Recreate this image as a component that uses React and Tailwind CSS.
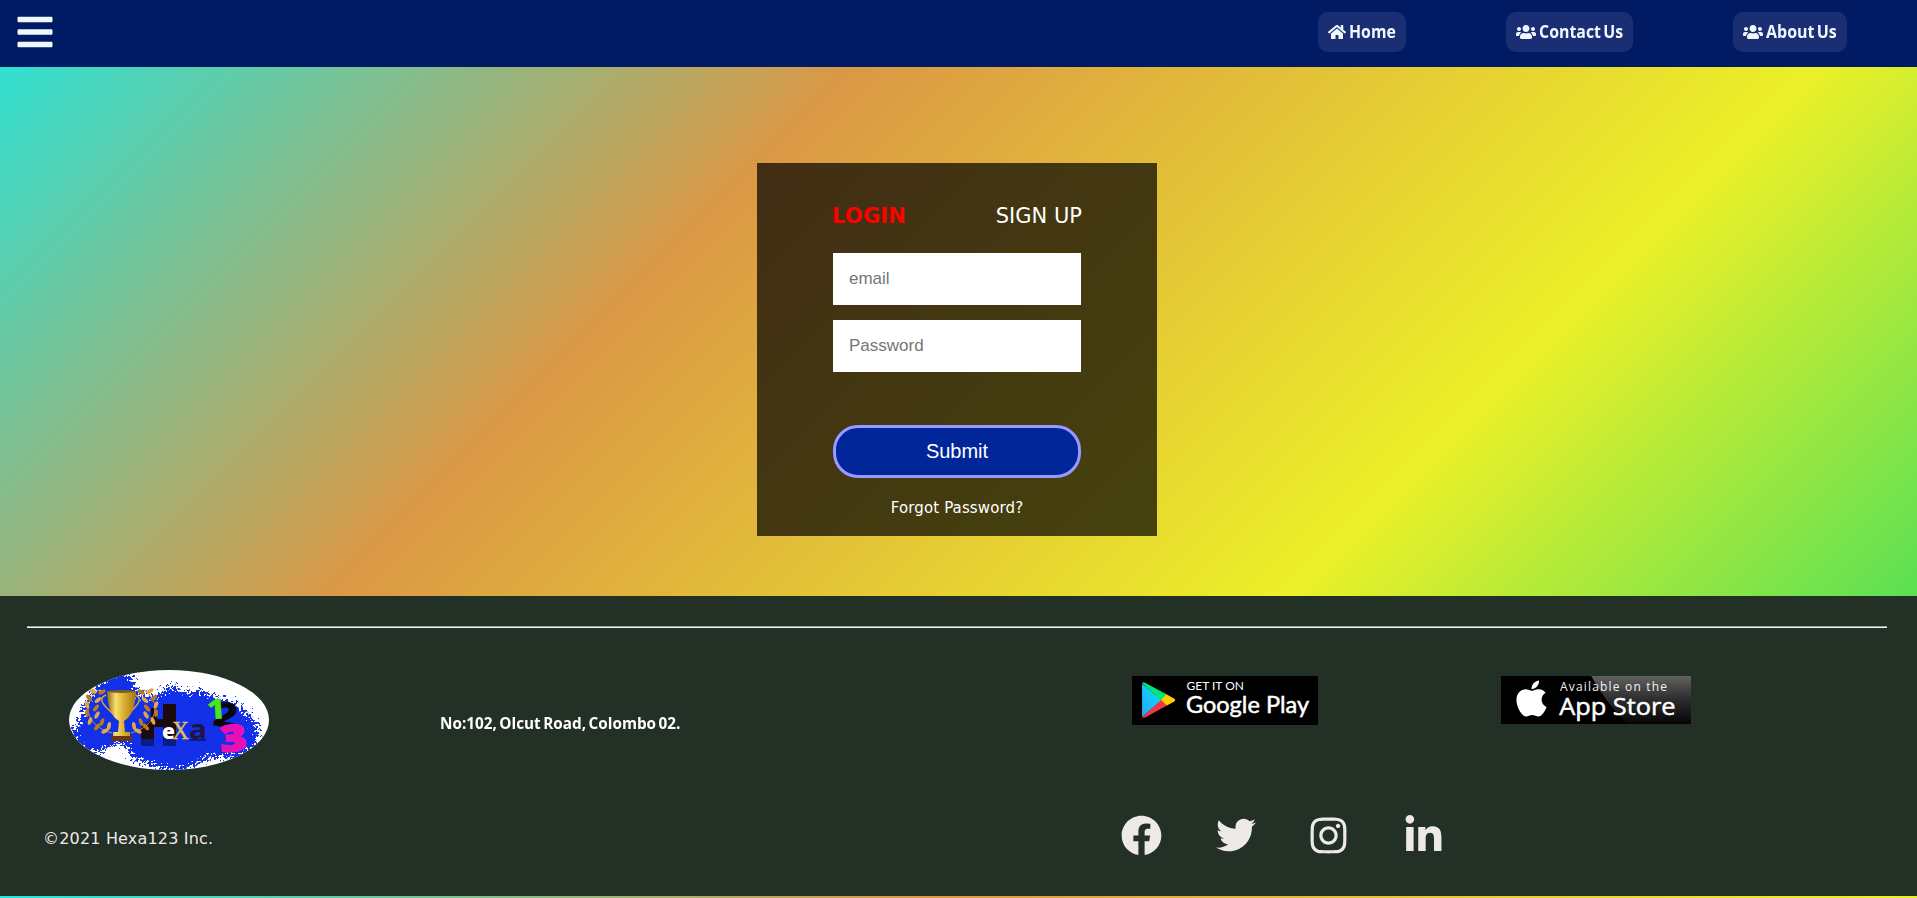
import React from "react";
import {
  FaApple,
  FaBars,
  FaFacebook,
  FaHome,
  FaInstagram,
  FaLinkedinIn,
  FaTwitter,
  FaUsers,
} from "react-icons/fa";

const navLink =
  "flex h-10 items-center gap-[3px] rounded-[10px] bg-[#1a2f73] pl-[10px] text-[17px] font-bold text-[#f0f8ff] font-['Open_Sans',sans-serif] whitespace-nowrap";

function NavBar() {
  return (
    <nav className="flex h-[67px] items-start bg-[#001a64] pr-[70px]">
      <button className="ml-[15px] mt-3 text-[40px] text-[#f0f8ff]" aria-label="Menu">
        <FaBars />
      </button>
      <div className="ml-auto mt-3 flex gap-[100px]">
        <a href="#home" className={navLink + " w-[88px]"}>
          <FaHome className="h-4 w-[18px] shrink-0" />
          <span className="w-0 origin-left scale-x-[0.93]">Home</span>
        </a>
        <a href="#contact" className={navLink + " w-[127px]"}>
          <FaUsers className="h-4 w-5 shrink-0" />
          <span className="w-0 origin-left scale-x-[0.935] [word-spacing:-2px]">Contact Us</span>
        </a>
        <a href="#about" className={navLink + " w-[114px]"}>
          <FaUsers className="h-4 w-5 shrink-0" />
          <span className="w-0 origin-left scale-x-[0.94] [word-spacing:-2px]">About Us</span>
        </a>
      </div>
    </nav>
  );
}

function LoginCard() {
  const field =
    "block h-[52px] w-full bg-white px-4 text-[17px] text-black outline-none placeholder:text-[#757575] font-['Liberation_Sans',sans-serif]";
  return (
    <form className="h-[373px] w-[400px] bg-black/70 px-[76px] pt-[38px] font-['DejaVu_Sans',sans-serif] text-white">
      <div className="flex h-[30px] items-center justify-between text-[21px] leading-[30px]">
        <span className="-ml-px font-bold tracking-[0.2px] text-[#ff0000]">LOGIN</span>
        <span className="-mr-px whitespace-nowrap">SIGN UP</span>
      </div>
      <input className={field + " mt-[22px]"} type="email" placeholder="email" />
      <input className={field + " mt-[15px]"} type="password" placeholder="Password" />
      <button
        type="button"
        className="mt-[53px] block h-[53px] w-full rounded-[25px] border-[3px] border-[#9999ff] bg-[#002699] pb-[2px] text-[20px] font-['Liberation_Sans',sans-serif]"
      >
        Submit
      </button>
      <p className="mt-[18px] text-center text-[15px] leading-6 tracking-[0.12px]">Forgot Password?</p>
    </form>
  );
}

const leaves = [
  [20, 21, -60], [16, 28, -40], [14, 35, -20], [14, 43, 0], [17, 51, 20], [24, 57, 40], [32, 61, 60],
  [29, 22, 60], [25, 30, 50], [23, 38, 40], [24, 45, 30], [29, 52, 20], [36, 56, 10],
];

function Wreath() {
  return (
    <g>
      <path d="M30 20C12 32 16 56 43 63" fill="none" stroke="#c98a2c" strokeWidth="1" />
      {leaves.map(([x, y, r], i) => (
        <ellipse
          key={i}
          cx={x + 4}
          cy={y}
          rx="1.9"
          ry="4"
          fill={i % 2 ? "#b9791f" : "#e0a848"}
          transform={`rotate(${r} ${x + 4} ${y})`}
        />
      ))}
    </g>
  );
}

function HexaLogo() {
  return (
    <svg className="h-[100px] w-[200px]" viewBox="0 0 200 100">
      <defs>
        <clipPath id="oval">
          <ellipse cx="100" cy="50" rx="100" ry="50" />
        </clipPath>
        <filter id="splatter" x="-20%" y="-20%" width="140%" height="140%" colorInterpolationFilters="sRGB">
          <feTurbulence type="fractalNoise" baseFrequency="0.4" numOctaves="3" seed="4" />
          <feDisplacementMap in="SourceGraphic" scale="24" xChannelSelector="R" yChannelSelector="G" />
          <feGaussianBlur stdDeviation="0.5" />
        </filter>
        <linearGradient id="gold">
          <stop offset="0" stopColor="#8f6a10" />
          <stop offset=".3" stopColor="#f7df70" />
          <stop offset=".6" stopColor="#d8ad2c" />
          <stop offset="1" stopColor="#a87712" />
        </linearGradient>
      </defs>
      <g clipPath="url(#oval)">
        <rect width="200" height="100" fill="#fff" />
        <path
          d="M3 62L13 48L15 35L33 11L50 2L62 6L68 24L84 28L94 21L105 15L116 23L135 20L145 28L165 33L180 45L190 58L187 75L171 88L150 87L138 88L125 96L110 101L95 99L80 94L63 88L57 75L48 72L35 81L20 81L8 74Z"
          fill="#1230e8"
          filter="url(#splatter)"
        />
        <path d="M72 69H85V76H72ZM94 69H107V76H94ZM120 69H137V71H120Z" fill="#0a1d86" />
        <path d="M82 38H88V49H94V34H107V69H94V57H85V69H72V58L82 49Z" fill="#1c0a0c" />
        <Wreath />
        <g transform="translate(105 0) scale(-1 1)">
          <Wreath />
        </g>
        <path d="M37 25Q29 28 36 36L45 45M66 25Q74 28 67 36L59 45" fill="none" stroke="#d5a740" strokeWidth="1.4" />
        <path d="M38 21H67Q66 45 55 51L56 62H61V66H44V62H49L50 51Q39 45 38 21Z" fill="url(#gold)" />
        <ellipse cx="52.500" cy="21.500" rx="14.500" ry="1.500" fill="#80611a" />
        <path d="M43 66H62L64 71H41Z" fill="#6b3414" />
        <text x="93" y="68.500" fontFamily="Open Sans, sans-serif" fontWeight="800" fontSize="21" fill="#fff">e</text>
        <text x="103" y="69" fontFamily="Liberation Serif, serif" fontSize="25" fill="#e3bd55" stroke="#e3bd55" strokeWidth=".4" textLength="17" lengthAdjust="spacingAndGlyphs">X</text>
        <text x="120" y="69" fontFamily="Open Sans, sans-serif" fontWeight="700" fontSize="27" fill="#231344" textLength="18" lengthAdjust="spacingAndGlyphs">a</text>
        <text x="145" y="57" fontFamily="Open Sans, sans-serif" fontWeight="800" fontSize="35" fill="#08080d" transform="rotate(10 156 45)" textLength="24" lengthAdjust="spacingAndGlyphs">2</text>
        <text x="138" y="48.500" fontFamily="Open Sans, sans-serif" fontWeight="700" fontSize="27" fill="#4be51a" stroke="#4be51a" strokeWidth=".8" transform="rotate(-4 148 40)" textLength="19" lengthAdjust="spacingAndGlyphs">1</text>
        <text x="151" y="81" fontFamily="Open Sans, sans-serif" fontWeight="800" fontSize="36" fill="#e80fb4" stroke="#e80fb4" strokeWidth="2" transform="rotate(-5 164 68)" textLength="26" lengthAdjust="spacingAndGlyphs">3</text>
      </g>
    </svg>
  );
}

function GooglePlayBadge() {
  return (
    <svg className="h-[49px] w-[186px]" viewBox="0 0 157 49" preserveAspectRatio="none">
      <defs>
        <linearGradient id="playBlue" x1="1" y1="0" x2="0" y2="1">
          <stop offset="0" stopColor="#00e5ff" />
          <stop offset="1" stopColor="#2aa5f8" />
        </linearGradient>
      </defs>
      <rect width="157" height="49" fill="#000" />
      <path d="M8.500 7.500V41L25 24.200Z" fill="url(#playBlue)" />
      <path d="M8.500 7Q9.500 5.800 11 6.800L29.500 18.500L24.500 24.500Z" fill="#00e676" />
      <path d="M29 18.200L35.500 22.500Q37.500 24 35.500 25.700L29 29.800L24.200 24.200Z" fill="#ffcc00" />
      <path d="M8.500 41.200L24.500 24L29.500 29.600L11 41.500Q9.500 42.300 8.500 41.200Z" fill="#f5364a" />
      <text x="46" y="14.500" fontFamily="Lato, sans-serif" fontSize="12" fill="#fff" textLength="48.500" lengthAdjust="spacingAndGlyphs">GET IT ON</text>
      <text x="45.500" y="37.500" fontFamily="Lato, sans-serif" fontSize="24" fill="#fff" stroke="#fff" strokeWidth=".5" textLength="104" lengthAdjust="spacingAndGlyphs">Google Play</text>
    </svg>
  );
}

function AppStoreBadge() {
  return (
    <div className="relative h-12 w-[190px]">
      <svg className="h-12 w-[190px]" viewBox="0 0 160 48" preserveAspectRatio="none">
        <defs>
          <linearGradient id="gloss" x1="0" y1="0" x2="0" y2="1">
            <stop offset="0" stopColor="#606060" />
            <stop offset=".5" stopColor="#2c2c2c" />
            <stop offset="1" stopColor="#050505" />
          </linearGradient>
        </defs>
        <rect width="160" height="48" fill="#000" />
        <path d="M76 0H160V48H106Q88 26 76 0Z" fill="url(#gloss)" />
        <text transform="scale(.842 1)" x="59" y="15" fontFamily="Open Sans, sans-serif" fontSize="12" fontWeight="500" fill="#f2f2f2" textLength="107">Available on the</text>
        <text x="49" y="39.500" fontFamily="Open Sans, sans-serif" fontSize="24.500" fontWeight="400" fill="#fff" stroke="#fff" strokeWidth=".5" textLength="98" lengthAdjust="spacingAndGlyphs">App Store</text>
      </svg>
      <FaApple className="absolute left-[10px] top-[2px] h-[41px] w-[41px] text-white" />
    </div>
  );
}

function Footer() {
  return (
    <footer className="h-[300px] bg-[#233025] pt-[30px]">
      <div className="ml-[27px] h-[2px] w-[1860px] border-b border-[#f3f4f3] bg-[#9a9f9a]" />
      <div className="flex h-[142px] items-start pt-[42px]">
        <div className="ml-[69px] shrink-0">
          <HexaLogo />
        </div>
        <p className="ml-[171px] mt-[41px] w-[692px] shrink-0 whitespace-nowrap font-['Open_Sans',sans-serif] text-[16px] font-bold leading-6 text-white">
          <span className="inline-block origin-left scale-x-[0.955] [word-spacing:-1.5px]">No:102, Olcut Road, Colombo 02.</span>
        </p>
        <div className="mt-[6px] shrink-0">
          <GooglePlayBadge />
        </div>
        <div className="ml-[183px] mt-[6px] shrink-0">
          <AppStoreBadge />
        </div>
      </div>
      <div className="mt-[45px] flex h-10 items-center text-[41px] text-[#eee9e9]">
        <p className="ml-[43px] mt-[7px] w-[1078px] font-['DejaVu_Sans',sans-serif] text-[16px] leading-6 tracking-[0.18px]">
          ©2021 Hexa123 Inc.
        </p>
        <FaFacebook className="shrink-0" />
        <FaTwitter className="ml-[54px] h-10 w-10 shrink-0" />
        <FaInstagram className="ml-[52px] shrink-0" />
        <FaLinkedinIn className="ml-[54px] shrink-0" />
      </div>
    </footer>
  );
}

export default function App() {
  return (
    <div className="h-[898px] overflow-hidden bg-[linear-gradient(135deg,#24e6dc_0%,#db9845_33%,#ecf028_67%,#14d969_100%)] bg-[length:100%_896px]">
      <NavBar />
      <main className="flex h-[529px] justify-center pr-[3px] pt-24">
        <LoginCard />
      </main>
      <Footer />
    </div>
  );
}
